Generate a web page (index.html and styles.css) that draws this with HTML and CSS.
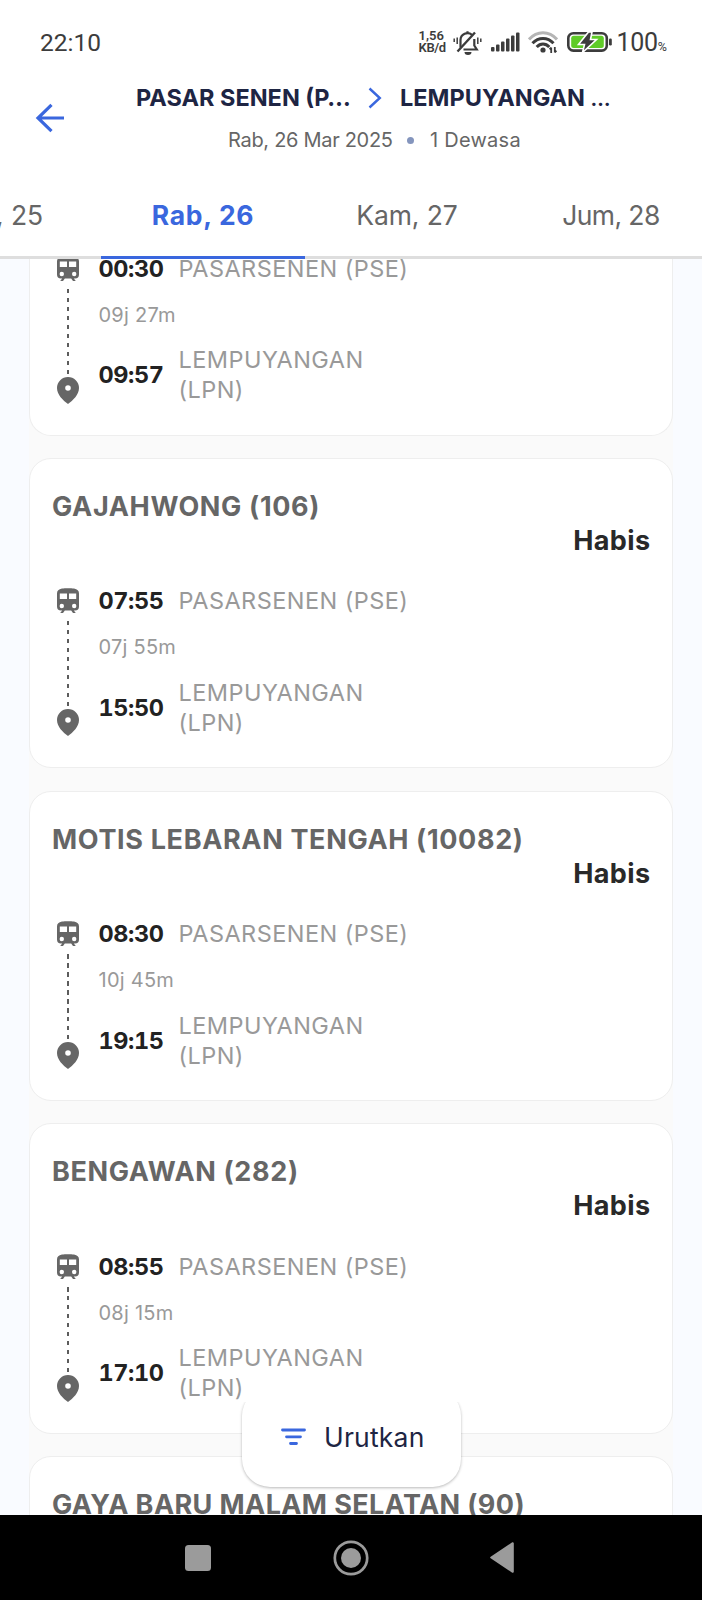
FILE: index.html
```
<!DOCTYPE html>
<html lang="id">
<head>
<meta charset="utf-8">
<title>Jadwal Kereta</title>
<link rel="stylesheet" href="styles.css">
</head>
<body>
<svg class="defs" width="0" height="0" aria-hidden="true">
  <symbol id="train" viewBox="0 0 22 25">
    <path fill-rule="evenodd" d="M5 .6C8 0 14 0 17 .6 20.400 1.200 22 2.800 22 5.500V18.500A4 4 0 0 1 18 22.500H16.800L18.800 25H16L14.200 22.500H7.800L6 25H3.200L5.200 22.500H4A4 4 0 0 1 0 18.500V5.500C0 2.800 1.600 1.200 5 .6ZM2.800 5.500V11H10V5.500ZM12 5.500V11H19.200V5.500ZM4.800 15.800A2.200 2.200 0 1 0 4.800 20.200 2.200 2.200 0 0 0 4.800 15.800ZM17.200 15.800A2.200 2.200 0 1 0 17.200 20.200 2.200 2.200 0 0 0 17.200 15.800Z"/>
  </symbol>
  <symbol id="pin" viewBox="0 0 22 27">
    <path fill-rule="evenodd" d="M11 0A11 11 0 0 1 22 11C22 17.500 16 23.500 11 27 6 23.500 0 17.500 0 11A11 11 0 0 1 11 0ZM11 8.200A2.800 2.800 0 1 0 11 13.800 2.800 2.800 0 0 0 11 8.200Z"/>
  </symbol>
</svg>
<div class="screen">
  <header class="header">
    <div class="status">
      <span class="clock">22:10</span>
      <div class="status-right">
        <div class="speed"><span>1,56</span><span class="unit">KB/d</span></div>
        <svg class="s-bell" width="29" height="25" viewBox="0 0 29 25" fill="none" stroke="#3c3c3c" stroke-width="2.200">
          <path d="M7.500 17.500V10A7 7 0 0 1 19 4.800M21.300 9V15.500L23.800 19.500H10.500M14.500 3V1.200" />
          <path d="M4.500 21.500 22 2.500" stroke-width="2.400"/>
          <path d="M11.500 22H18.500A3.500 3 0 0 1 11.500 22Z" fill="#3c3c3c" stroke="none"/>
          <path d="M1.200 8.500V12M4.200 7.500V14M24.800 7.500V14M27.800 8.500V12" stroke-width="1.500"/>
        </svg>
        <svg class="s-signal" width="29" height="20" viewBox="0 0 29 20" fill="#3c3c3c">
          <rect x="0" y="15" width="3.500" height="4.500" rx="1"/><rect x="5" y="12.500" width="3.500" height="7" rx="1"/><rect x="10" y="9.500" width="3.500" height="10" rx="1"/><rect x="15" y="6.500" width="3.500" height="13" rx="1"/><rect x="20" y="3.500" width="3.500" height="16" rx="1"/><rect x="25" y="0.500" width="3.500" height="19" rx="1"/>
        </svg>
        <svg class="s-wifi" width="30" height="23" viewBox="0 0 30 23" fill="none" stroke="#3c3c3c" stroke-width="3">
          <path d="M1 8.500C9-.4 21-.4 29 8.500" stroke="#b5b5b5"/>
          <path d="M4.500 12.200C10.500 5.800 19.500 5.800 25.500 12.200M8.700 16C12.400 12 17.600 12 21.300 16"/>
          <circle cx="15" cy="19" r="2.600" fill="#3c3c3c" stroke="none"/>
          <path d="M23.200 22V16.500M21.600 18.400 23.200 16.500M26.800 16V21.500M28.400 19.600 26.800 21.500" stroke-width="1.800"/>
        </svg>
        <svg class="s-batt" width="45" height="22" viewBox="0 0 45 22">
          <rect x="1.300" y="2.200" width="38.500" height="17.400" rx="5" fill="#fff" stroke="#3c3c3c" stroke-width="2.600"/>
          <rect x="4.200" y="4.800" width="32.600" height="12.200" rx="2.500" fill="#5fcb27"/>
          <rect x="42" y="7.500" width="2.800" height="7" rx="1.200" fill="#3c3c3c"/>
          <path d="M21.500 1 11.500 13.500H17.500L15.500 21.500 29.500 8.500H23.500L25 1Z" fill="#3c3c3c" stroke="#fff" stroke-width="1.600"/>
        </svg>
        <span class="pct">100<small>%</small></span>
      </div>
    </div>
    <div class="route-bar">
      <svg class="back" width="30" height="30" viewBox="0 0 30 30" fill="none" stroke="#3a67de" stroke-width="3.200"><path d="M29 15H3M16.500 1.800 3 15 16.500 28.200"/></svg>
      <div class="heading">
        <h1 class="trip"><span class="from">PASAR SENEN (P…</span><svg class="chev" width="14" height="22" viewBox="0 0 14 22" fill="none" stroke="#3a67de" stroke-width="2.400"><path d="M1.500 1.500 11.800 11 1.500 20.500"/></svg><span class="to">LEMPUYANGAN <span class="ell">…</span></span></h1>
        <p class="sub"><span class="date">Rab, 26 Mar 2025</span><i class="dot"></i><span class="pax">1 Dewasa</span></p>
      </div>
    </div>
    <nav class="tabs">
      <span class="tab tab-first">, 25</span><span class="tab active">Rab, 26</span><span class="tab">Kam, 27</span><span class="tab tab-last">Jum, 28</span>
    </nav>
  </header>

  <main class="results">
    <div class="list">
      <article class="card card-scrolled">
        <div class="journey">
          <div class="track"><svg class="train"><use href="#train"/></svg><i class="dash"></i><svg class="pin"><use href="#pin"/></svg></div>
          <div class="stops">
            <div class="stop"><b class="time">00:30</b><span class="station">PASARSENEN (PSE)</span></div>
            <div class="dur">09j 27m</div>
            <div class="stop"><b class="time">09:57</b><span class="station">LEMPUYANGAN (LPN)</span></div>
          </div>
        </div>
      </article>
      <article class="card">
        <h2 class="name">GAJAHWONG (106)</h2>
        <p class="price">Habis</p>
        <div class="journey">
          <div class="track"><svg class="train"><use href="#train"/></svg><i class="dash"></i><svg class="pin"><use href="#pin"/></svg></div>
          <div class="stops">
            <div class="stop"><b class="time">07:55</b><span class="station">PASARSENEN (PSE)</span></div>
            <div class="dur">07j 55m</div>
            <div class="stop"><b class="time">15:50</b><span class="station">LEMPUYANGAN (LPN)</span></div>
          </div>
        </div>
      </article>
      <article class="card">
        <h2 class="name">MOTIS LEBARAN TENGAH (10082)</h2>
        <p class="price">Habis</p>
        <div class="journey">
          <div class="track"><svg class="train"><use href="#train"/></svg><i class="dash"></i><svg class="pin"><use href="#pin"/></svg></div>
          <div class="stops">
            <div class="stop"><b class="time">08:30</b><span class="station">PASARSENEN (PSE)</span></div>
            <div class="dur">10j 45m</div>
            <div class="stop"><b class="time">19:15</b><span class="station">LEMPUYANGAN (LPN)</span></div>
          </div>
        </div>
      </article>
      <article class="card">
        <h2 class="name">BENGAWAN (282)</h2>
        <p class="price">Habis</p>
        <div class="journey">
          <div class="track"><svg class="train"><use href="#train"/></svg><i class="dash"></i><svg class="pin"><use href="#pin"/></svg></div>
          <div class="stops">
            <div class="stop"><b class="time">08:55</b><span class="station">PASARSENEN (PSE)</span></div>
            <div class="dur">08j 15m</div>
            <div class="stop"><b class="time">17:10</b><span class="station">LEMPUYANGAN (LPN)</span></div>
          </div>
        </div>
      </article>
      <article class="card">
        <h2 class="name name-long">GAYA BARU MALAM SELATAN (90)</h2>
      </article>
    </div>
    <button class="sort" type="button">
      <svg width="25" height="18" viewBox="0 0 25 18" stroke="#3a67de" stroke-width="2.800" stroke-linecap="round"><path d="M1.500 2H23.500M5.500 8.800H19.500M9.500 15.500H15.500"/></svg>
      <span>Urutkan</span>
    </button>
  </main>

  <footer class="navbar">
    <svg width="26" height="26" viewBox="0 0 26 26"><rect width="26" height="26" rx="3.500" fill="#9b9b9b"/></svg>
    <svg width="36" height="36" viewBox="0 0 36 36"><circle cx="18" cy="18" r="16.200" fill="none" stroke="#9b9b9b" stroke-width="2.700"/><circle cx="18" cy="18" r="10" fill="#9b9b9b"/></svg>
    <svg width="24" height="31" viewBox="0 0 24 31"><path d="M22.800 1.200V29.800L1.200 15.500Z" fill="#9b9b9b" stroke="#9b9b9b" stroke-width="2" stroke-linejoin="round"/></svg>
  </footer>
</div>
</body>
</html>
```
FILE: styles.css
```
* { box-sizing: border-box; }
body, h1, h2, p { margin: 0; }
body { font-family: "Inter", "Liberation Sans", sans-serif; background: #fff; }
svg { display: block; flex: none; }
.defs { position: absolute; }
.screen { width: 702px; height: 1600px; display: flex; flex-direction: column; overflow: hidden; }

.header { height: 259px; flex: none; background: #fff; position: relative; z-index: 1; display: flex; flex-direction: column; }
.status { height: 84px; padding: 0 35px 0 40px; display: flex; align-items: center; justify-content: space-between; font-family: "Roboto", sans-serif; color: #3c3c3c; }
.clock { font-size: 24.500px; letter-spacing: 0; }
.status-right { display: flex; align-items: center; height: 40px; }
.speed { display: flex; flex-direction: column; font-size: 13px; line-height: 12.500px; font-weight: 600; width: 28px; white-space: nowrap; }
.unit { letter-spacing: -0.400px; }
.s-bell { margin-left: 6px; }
.s-signal { margin-left: 9px; }
.s-wifi { margin-left: 8px; }
.s-batt { margin-left: 9px; }
.pct { margin-left: 5px; font-size: 25px; letter-spacing: -0.300px; }
.pct small { font-size: 12.500px; letter-spacing: 0; }

.route-bar { height: 90px; padding-left: 35px; display: flex; align-items: flex-start; }
.back { margin-top: 19px; }
.heading { flex: 1; padding-left: 70px; }
.trip { height: 27px; display: flex; align-items: center; font-size: 23.500px; font-weight: 700; color: #1e2543; white-space: nowrap; }
.from { width: 233px; padding-left: 1px; }
.to { margin-left: 18px; }
.ell { font-size: 20px; }
.sub { height: 28px; margin-top: 15px; padding-left: 93px; display: flex; align-items: center; font-size: 20px; color: #666; white-space: nowrap; }
.date { letter-spacing: -0.300px; width: 164px; }
.dot { width: 7px; height: 7px; border-radius: 50%; background: #8495bd; margin: 0 16px 0 15px; }
.pax { letter-spacing: 0.250px; }

.tabs { height: 85px; display: grid; grid-template-columns: 101px 204px 204px 204px; border-bottom: 3px solid #dedede; font-size: 26.500px; color: #666; }
.tab { display: flex; align-items: center; justify-content: center; height: 85px; padding-bottom: 4px; letter-spacing: -0.100px; white-space: nowrap; }
.tab-first { justify-content: flex-end; padding-right: 58px; }
.tab-last { letter-spacing: -0.600px; }
.active { color: #3a67de; font-weight: 700; letter-spacing: 0.700px; border-bottom: 3px solid #3a67de; padding-bottom: 0; }

.results { flex: 1; min-height: 0; background: #f9fbff; overflow: hidden; padding: 0 29px; position: relative; }
.list { display: flex; flex-direction: column; gap: 22.400px; background: #fafafa; }
.card { height: 310.300px; flex: none; background: #fff; border: 1.500px solid #eee; border-radius: 22px; padding: 33px 21.500px 0 22px; }
.card-scrolled { height: 183px; margin-top: -6.300px; padding-top: 1px; border-top: 0; border-radius: 0 0 22px 22px; }
.card-scrolled .journey { margin-top: 0; }
.name { font-size: 27px; line-height: 30px; font-weight: 700; letter-spacing: 0.650px; color: #666; white-space: nowrap; }
.name-long { letter-spacing: 0.400px; }
.price { margin-top: 3.800px; font-size: 27px; line-height: 30px; font-weight: 700; letter-spacing: 0.400px; color: #292929; text-align: right; }
.journey { margin-top: 30.500px; display: flex; }
.track { width: 22px; margin-left: 4.500px; display: flex; flex-direction: column; align-items: center; }
.train { width: 22px; height: 25px; margin-top: 2px; fill: #666; }
.dash { width: 2px; height: 86px; margin: 8px 0 2px; background: repeating-linear-gradient(#5c5c5c 0 4.500px, transparent 4.500px 9px); }
.pin { width: 22px; height: 27px; fill: #666; }
.stops { margin-left: 20px; }
.stop { display: flex; align-items: center; }
.time { width: 65px; margin-right: 15px; font-size: 23.500px; font-weight: 700; line-height: 30px; letter-spacing: -0.400px; font-variant-numeric: tabular-nums; white-space: nowrap; color: #222; display: flex; justify-content: flex-end; }
.station { width: 234px; font-size: 23.500px; line-height: 30px; letter-spacing: 0.450px; color: #999; }
.dur { height: 30px; margin: 15.800px 0; font-size: 20px; line-height: 30px; letter-spacing: 0.250px; color: #999; }

.sort { position: absolute; left: 242px; bottom: 28px; width: 219px; height: 99px; border: 0; border-radius: 28px; background: #fff; box-shadow: 0 1px 3px rgba(0, 0, 0, 0.280); clip-path: inset(14px -4px -5px -4px); display: flex; align-items: center; padding: 0 0 2px 39px; gap: 18px; font: 400 26.500px "Inter", sans-serif; letter-spacing: 0.200px; color: #1e2543; }

.navbar { height: 85px; flex: none; background: #000; display: grid; grid-template-columns: 26px 36px 24px; column-gap: 121.500px; align-items: center; padding-left: 185px; }
```
